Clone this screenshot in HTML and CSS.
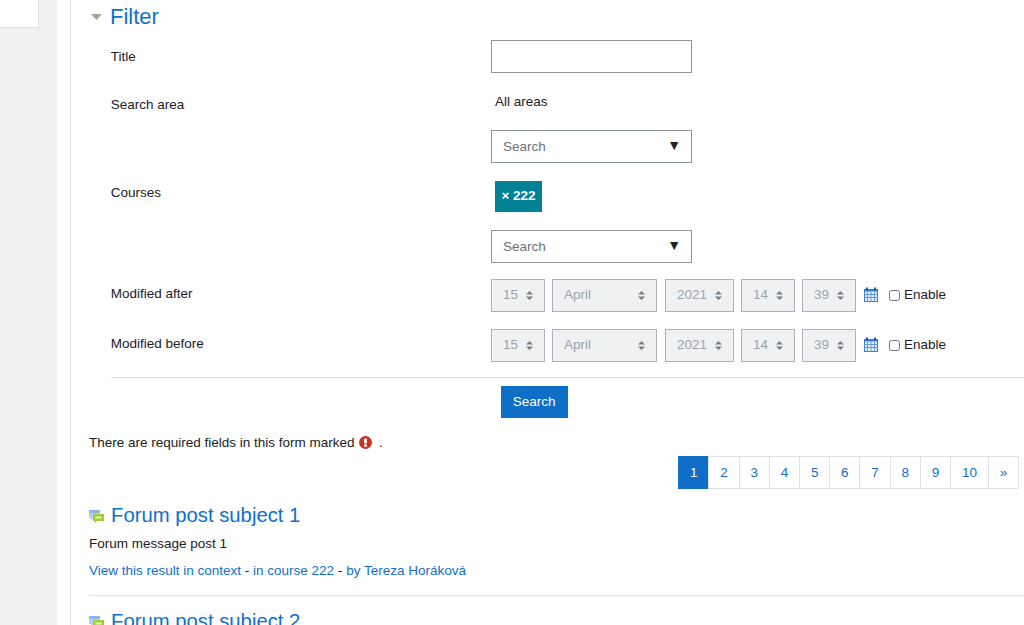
FILE: index.html
```html
<!DOCTYPE html>
<html lang="en">

<head>
  <meta charset="UTF-8" />
  <title>Search</title>
  <link rel="stylesheet" href="styles.css">
</head>

<body>
  <div class="page">
    <aside class="side">
      <div class="side-block"></div>
    </aside>

    <main class="main">
      <div class="content">
        <div class="filter-head">
          <svg class="caret" width="11" height="6" viewBox="0 0 11 6"><path d="M0 0h11L5.500 6z" fill="#a3a3a3" /></svg>
          <h3>Filter</h3>
        </div>

        <form class="filter">
          <div class="row row-title">
            <label>Title</label>
            <div class="field"><input type="text" class="text-input" /></div>
          </div>

          <div class="row row-area">
            <label>Search area</label>
            <div class="field">
              <div class="picked">All areas</div>
              <div class="combo"><span>Search</span><b>&#9660;</b></div>
            </div>
          </div>

          <div class="row row-courses">
            <label>Courses</label>
            <div class="field">
              <div class="tag">× 222</div>
              <div class="combo"><span>Search</span><b>&#9660;</b></div>
            </div>
          </div>

          <div class="row row-date">
            <label>Modified after</label>
            <div class="field date-field">
              <div class="sel w54">15<svg width="7" height="9" viewBox="0 0 7 9"><path d="M3.500 0L7 3.500H0zM3.500 9L0 5.500h7z" /></svg></div>
              <div class="sel w105">April<svg width="7" height="9" viewBox="0 0 7 9"><path d="M3.500 0L7 3.500H0zM3.500 9L0 5.500h7z" /></svg></div>
              <div class="sel w69">2021<svg width="7" height="9" viewBox="0 0 7 9"><path d="M3.500 0L7 3.500H0zM3.500 9L0 5.500h7z" /></svg></div>
              <div class="sel w54">14<svg width="7" height="9" viewBox="0 0 7 9"><path d="M3.500 0L7 3.500H0zM3.500 9L0 5.500h7z" /></svg></div>
              <div class="sel w54">39<svg width="7" height="9" viewBox="0 0 7 9"><path d="M3.500 0L7 3.500H0zM3.500 9L0 5.500h7z" /></svg></div>
              <svg class="cal" width="14" height="15" viewBox="0 0 14 15">
                <rect x="0.500" y="2.500" width="13" height="12" fill="#e6effa" stroke="#2f7fd6" />
                <rect x="0" y="2" width="14" height="2.500" fill="#2f7fd6" />
                <path d="M3 0.500v3M11 0.500v3" stroke="#1a5fb0" stroke-width="2" />
                <path d="M0 7.500h14M0 10.500h14M3.500 5v10M7 5v10M10.500 5v10" stroke="#5a9be2" />
              </svg>
              <label class="enable"><input type="checkbox" />Enable</label>
            </div>
          </div>

          <div class="row row-date">
            <label>Modified before</label>
            <div class="field date-field">
              <div class="sel w54">15<svg width="7" height="9" viewBox="0 0 7 9"><path d="M3.500 0L7 3.500H0zM3.500 9L0 5.500h7z" /></svg></div>
              <div class="sel w105">April<svg width="7" height="9" viewBox="0 0 7 9"><path d="M3.500 0L7 3.500H0zM3.500 9L0 5.500h7z" /></svg></div>
              <div class="sel w69">2021<svg width="7" height="9" viewBox="0 0 7 9"><path d="M3.500 0L7 3.500H0zM3.500 9L0 5.500h7z" /></svg></div>
              <div class="sel w54">14<svg width="7" height="9" viewBox="0 0 7 9"><path d="M3.500 0L7 3.500H0zM3.500 9L0 5.500h7z" /></svg></div>
              <div class="sel w54">39<svg width="7" height="9" viewBox="0 0 7 9"><path d="M3.500 0L7 3.500H0zM3.500 9L0 5.500h7z" /></svg></div>
              <svg class="cal" width="14" height="15" viewBox="0 0 14 15">
                <rect x="0.500" y="2.500" width="13" height="12" fill="#e6effa" stroke="#2f7fd6" />
                <rect x="0" y="2" width="14" height="2.500" fill="#2f7fd6" />
                <path d="M3 0.500v3M11 0.500v3" stroke="#1a5fb0" stroke-width="2" />
                <path d="M0 7.500h14M0 10.500h14M3.500 5v10M7 5v10M10.500 5v10" stroke="#5a9be2" />
              </svg>
              <label class="enable"><input type="checkbox" />Enable</label>
            </div>
          </div>

          <div class="actions">
            <button type="button" class="btn">Search</button>
          </div>
        </form>

        <p class="required">There are required fields in this form marked
          <svg class="req-icon" width="13" height="13" viewBox="0 0 13 13">
            <circle cx="6.500" cy="6.500" r="6.500" fill="#ca3120" />
            <rect x="5" y="2.500" width="3" height="5" rx="1" fill="#fff" />
            <circle cx="6.500" cy="9.500" r="1.500" fill="#fff" />
          </svg>
          <span class="dot">.</span>
        </p>

        <ul class="pager">
          <li class="active"><a>1</a></li>
          <li><a>2</a></li>
          <li><a>3</a></li>
          <li><a>4</a></li>
          <li><a>5</a></li>
          <li><a>6</a></li>
          <li><a>7</a></li>
          <li><a>8</a></li>
          <li><a>9</a></li>
          <li><a>10</a></li>
          <li><a>»</a></li>
        </ul>

        <article class="result">
          <h4>
            <svg class="forum" width="15" height="14" viewBox="0 0 15 14">
              <path d="M0 0h11v8H4.500L2 10.500V8H0z" fill="#b4cef5" />
              <rect x="0" y="0" width="11" height="3" fill="#8fb3ea" />
              <path d="M4 4h11v7H8l-2 2.500V11H4z" fill="#a2cd2d" />
              <rect x="6.500" y="6.500" width="6" height="2" fill="#eef6d2" />
            </svg>
            <a>Forum post subject 1</a>
          </h4>
          <p class="msg">Forum message post 1</p>
          <p class="meta"><a>View this result in context</a> - <a>in course 222</a> - <a>by Tereza Horáková</a></p>
        </article>

        <article class="result">
          <h4>
            <svg class="forum" width="15" height="14" viewBox="0 0 15 14">
              <path d="M0 0h11v8H4.500L2 10.500V8H0z" fill="#b4cef5" />
              <rect x="0" y="0" width="11" height="3" fill="#8fb3ea" />
              <path d="M4 4h11v7H8l-2 2.500V11H4z" fill="#a2cd2d" />
              <rect x="6.500" y="6.500" width="6" height="2" fill="#eef6d2" />
            </svg>
            <a>Forum post subject 2</a>
          </h4>
        </article>
      </div>
    </main>
  </div>
</body>

</html>
```

FILE: styles.css
```css
html,
body {
  margin: 0;
  padding: 0;
  height: 625px;
  overflow: hidden;
}

body {
  font-family: "Liberation Sans", Arial, sans-serif;
  font-size: 13.5px;
  line-height: 20px;
  color: #1d2125;
  background: #fff;
}

a {
  color: #1070c9;
  text-decoration: none;
}

.page {
  display: flex;
  height: 625px;
}

.side {
  width: 57px;
  flex-shrink: 0;
  background: #f1f1f1;
}

.side-block {
  width: 38px;
  height: 27px;
  background: #fff;
  border-right: 1px solid #dee2e6;
  border-bottom: 1px solid #dee2e6;
}

.main {
  flex: 1;
  padding-left: 13px;
  min-width: 0;
}

.content {
  height: 625px;
  border-left: 1px solid #dee2e6;
  padding-left: 18px;
  overflow: hidden;
}

.filter-head {
  box-sizing: border-box;
  display: flex;
  align-items: center;
  height: 32px;
  padding-top: 2px;
}

.filter-head h3 {
  margin: 0 0 0 8px;
  font-size: 22px;
  font-weight: 400;
  line-height: 30px;
  color: #1070c9;
}

.caret {
  margin-left: 2px;
}

.filter {
  padding-left: 21.7px;
}

.row {
  display: flex;
}

.row > label {
  width: 380.3px;
  flex-shrink: 0;
}

.row-title {
  padding-top: 8px;
  height: 33px;
  margin-bottom: 21px;
}

.row-title > label {
  padding-top: 7px;
}

.text-input {
  display: block;
  box-sizing: border-box;
  width: 201px;
  height: 33px;
  border: 1px solid #8f959e;
  background: #fff;
  margin: 0;
  padding: 0;
}

.row-area {
  height: 88px;
}

.row-area > label {
  padding-top: 1px;
}

.picked {
  height: 20px;
  padding-left: 4px;
  margin: -2px 0 18px;
}

.combo {
  box-sizing: border-box;
  display: flex;
  justify-content: space-between;
  align-items: center;
  width: 201px;
  height: 33px;
  border: 1px solid #8f959e;
  padding: 0 10px 0 11px;
  color: #6a737b;
}

.combo b {
  font-size: 14px;
  font-weight: 400;
  color: #1d2125;
  margin-top: -3px;
}

.row-courses {
  height: 97px;
}

.row-courses > label {
  padding-top: 1px;
}

.tag {
  box-sizing: border-box;
  width: 47px;
  height: 31px;
  margin: -1px 0 18px 4px;
  background: #008196;
  color: #fff;
  font-weight: 700;
  text-align: center;
  line-height: 29px;
}

.row-date {
  height: 33px;
  margin-bottom: 17px;
}

.row-date > label {
  padding-top: 5px;
}

.date-field {
  display: flex;
  align-items: center;
}

.sel {
  box-sizing: border-box;
  display: flex;
  justify-content: space-between;
  align-items: center;
  height: 33px;
  margin-right: 7px;
  padding: 0 11px 2px 11px;
  border: 1px solid #aeb2b8;
  background: #eff1f3;
  color: #9ea3a9;
}

.sel svg {
  fill: #7b7f85;
  margin-top: 2px;
}

.w105 {
  width: 105px;
  margin-right: 8px;
}

.w69 {
  width: 69px;
}

.w54 {
  width: 54px;
}

.cal {
  margin: -2px 11px 0 1px;
}

.enable {
  display: flex;
  align-items: center;
  padding-bottom: 2px;
}

.enable input {
  width: 11px;
  height: 11px;
  margin: 2px 4px 0 0;
}

.actions {
  border-top: 1px solid #dee2e6;
  margin-top: -2px;
  padding: 8px 0 0 390px;
}

.btn {
  display: block;
  width: 67px;
  height: 32px;
  padding: 0;
  border: 0;
  background: #0f6ec5;
  color: #fff;
  font: inherit;
}

.required {
  margin: 15px 0 0;
}

.req-icon {
  vertical-align: -2px;
  margin-left: 1px;
}

.dot {
  margin-left: 3px;
}

.pager {
  display: flex;
  justify-content: flex-end;
  list-style: none;
  margin: 3px 5px 0 0;
  padding: 0;
}

.pager li {
  margin-left: -1px;
}

.pager a {
  display: block;
  box-sizing: content-box;
  height: 31px;
  line-height: 31px;
  padding: 0 10.85px;
  border: 1px solid #dee2e6;
  background: #fff;
  text-align: center;
}

.pager .active a {
  background: #0f6ec5;
  border-color: #0f6ec5;
  color: #fff;
}

.result {
  border-bottom: 1px solid #dee2e6;
  padding-bottom: 14px;
  margin-bottom: 3px;
}

.result h4 {
  display: flex;
  align-items: center;
  margin: 12px 0 0;
  font-size: 20.3px;
  font-weight: 400;
  line-height: 28px;
}

.result + .result h4 {
  margin-top: 11px;
}

.forum {
  margin: 3px 7px 0 0;
}

.msg {
  margin: 5px 0 0;
}

.meta {
  margin: 7px 0 0;
}
```
